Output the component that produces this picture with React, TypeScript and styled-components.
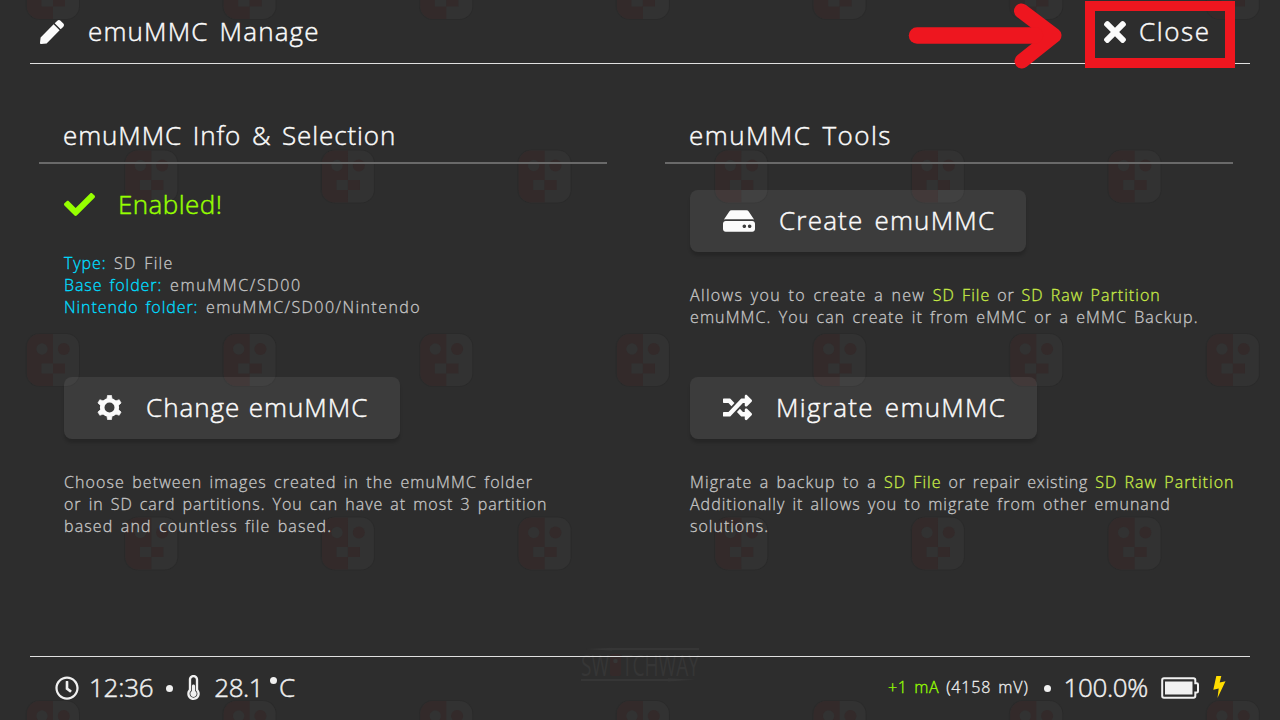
import React from 'react';
import styled, { createGlobalStyle } from 'styled-components';
import {
  FaPen,
  FaTimes,
  FaCheck,
  FaHdd,
  FaRandom,
  FaRegClock,
  FaThermometerHalf,
} from 'react-icons/fa';

const GlobalStyle = createGlobalStyle`
  * {
    box-sizing: border-box;
  }

  body {
    margin: 0;
    background: #2d2d2d;
    font-family: 'Open Sans', 'Noto Sans', sans-serif;
    font-weight: 300;
  }
`;

const Screen = styled.div`
  position: relative;
  display: flex;
  flex-direction: column;
  width: 1280px;
  height: 720px;
  overflow: hidden;
  background: #2d2d2d;
  color: #fbfbfb;
`;

const Wallpaper = styled.svg`
  position: absolute;
  inset: 0;
`;

const Header = styled.header`
  position: relative;
  display: flex;
  align-items: center;
  height: 64px;
  margin: 0 30px;
  padding: 0 40px 1px 10px;
  border-bottom: 1px solid #e0e0e0;
`;

const Icon = styled.span<{ $w: number; $gap: number; $color?: string }>`
  display: flex;
  flex: none;
  width: ${({ $w }) => $w}px;
  margin: 1px ${({ $gap }) => $gap}px 0 0;
  color: ${({ $color }) => $color || '#fbfbfb'};
`;

const Label = styled.span<{ $ls?: number; $ws?: number }>`
  font-size: 26px;
  line-height: 36px;
  white-space: nowrap;
  letter-spacing: ${({ $ls = 1.2 }) => $ls}px;
  word-spacing: ${({ $ws = 3 }) => $ws}px;
  -webkit-text-stroke: 0.45px currentColor;
`;

const CloseButton = styled.button`
  display: flex;
  align-items: center;
  width: 106px;
  margin-left: auto;
  padding: 0;
  border: none;
  background: none;
  color: inherit;
  font: inherit;
`;

const Highlight = styled.div`
  position: absolute;
  top: 1px;
  left: 1085px;
  width: 150px;
  height: 67px;
  border: 10px solid #ee161f;
`;

const Arrow = styled.svg`
  position: absolute;
  top: 0;
  left: 905px;
`;

const Main = styled.main`
  position: relative;
  display: flex;
  flex: 1;
  gap: 58px;
  padding: 53px 47px 0 39px;
`;

const Column = styled.section`
  width: 568px;
`;

const Heading = styled.h2`
  display: flex;
  height: 47px;
  margin: 0;
  padding-left: 24px;
  border-bottom: 2px solid #696969;
  font-weight: inherit;
`;

const Body = styled.div`
  display: flex;
  flex-direction: column;
  align-items: flex-start;
  padding: 26px 0 0 25px;
`;

const Info = styled.div`
  height: 187px;
`;

const Status = styled.div`
  display: flex;
  align-items: center;
  height: 28px;
  margin-bottom: 34px;
  color: #96ff00;
`;

const Text = styled.div`
  color: #c5c5c5;
`;

const Line = styled.div<{ $ls?: number; $ws?: number }>`
  height: 22px;
  font-size: 16px;
  line-height: 22px;
  white-space: nowrap;
  letter-spacing: ${({ $ls = 1.1 }) => $ls}px;
  word-spacing: ${({ $ws = 2 }) => $ws}px;
  -webkit-text-stroke: 0.3px currentColor;
`;

const Cyan = styled.span`
  color: #00ddff;
  letter-spacing: 0.93px;
`;

const Lime = styled.span`
  color: #c7ea46;
  letter-spacing: 1.04px;
`;

const Tight = styled.span`
  letter-spacing: 0.8px;
`;

const Tool = styled.div<{ $height?: number }>`
  height: ${({ $height }) => ($height ? `${$height}px` : 'auto')};
`;

const Button = styled.button<{ $width: number }>`
  display: flex;
  align-items: center;
  width: ${({ $width }) => $width}px;
  height: 62px;
  margin: 0 0 32px;
  padding: 0 0 2px 33px;
  border: none;
  border-radius: 8px;
  background: rgba(255, 255, 255, 0.075);
  box-shadow: 0 4px 3px rgba(0, 0, 0, 0.16);
  color: inherit;
  font: inherit;
`;

const Footer = styled.footer`
  position: relative;
  display: flex;
  align-items: center;
  height: 64px;
  margin: 0 30px;
  padding: 0 23px 3px 25px;
  border-top: 1px solid #e0e0e0;
  color: #f0f0f0;
`;

const Dot = styled.span<{ $left: number; $right: number }>`
  flex: none;
  width: 7px;
  height: 7px;
  margin: 2px ${({ $right }) => $right}px 0 ${({ $left }) => $left}px;
  border-radius: 50%;
  background: #f0f0f0;
`;

const Degree = styled.span`
  width: 7px;
  height: 7px;
  margin: -13px 2px 0 7px;
  border-radius: 50%;
  background: #f0f0f0;
`;

const Power = styled.div`
  display: flex;
  align-items: center;
  width: 339px;
  margin-left: auto;
`;

const Current = styled(Line)<{ $green?: boolean }>`
  margin-right: 7px;
  color: ${({ $green }) => ($green ? '#96ff00' : '#f0f0f0')};
`;

const Percent = styled(Label)`
  width: 97px;
`;

const Gear = () => (
  <svg width="25" height="25" viewBox="0 0 25 25">
    <circle cx="12.5" cy="12.5" r="7.3" fill="none" stroke="currentColor" strokeWidth="4.6" />
    {[0, 60, 120, 180, 240, 300].map((angle) => (
      <path
        key={angle}
        d="M10.6.2h3.800l.7 3.600h-5.200z"
        transform={`rotate(${angle} 12.5 12.5)`}
        fill="currentColor"
        stroke="currentColor"
        strokeWidth="0.6"
        strokeLinejoin="round"
      />
    ))}
  </svg>
);

const Battery = () => (
  <svg width="38" height="22" viewBox="0 0 38 22">
    <path
      d="M3 1.2h29.5q1.8 0 1.8 1.8v3.2h1.5q1.2 0 1.2 1.2v6.8q0 1.2-1.2 1.2h-1.5V19q0 1.8-1.8 1.8H3Q1.2 20.8 1.2 19V3Q1.2 1.2 3 1.2z"
      fill="none"
      stroke="#f0f0f0"
      strokeWidth="2"
    />
    <rect x="4" y="4.5" width="27.5" height="13" fill="#f0f0f0" />
  </svg>
);

const Bolt = () => (
  <svg width="13" height="22" viewBox="0 0 13 22">
    <path d="M3.3 0h5L6.7 6.6l5.8-1.4L4.5 22 5.7 12.5.3 13.8z" fill="#ffdd00" />
  </svg>
);

const STEP = 98.33;

const faces = [-33, 150.5, 334, 517.5, 701].flatMap((y, row) =>
  Array.from({ length: row % 2 ? 6 : 7 }, (_, i) => ({
    x: 27 + STEP * (2 * i + (row % 2)),
    y,
  })),
);

const Background = () => (
  <Wallpaper width="1280" height="720">
    <defs>
      <g id="face">
        <rect x="-1.3" y="-0.8" width="54.2" height="53.6" rx="13.5" fill="#2a2a2a" />
        <rect width="52" height="52" rx="12.5" fill="#323232" />
        <path d="M26 0v52H12.5A12.5 12.5 0 0 1 0 39.500v-27A12.5 12.5 0 0 1 12.5 0z" fill="#332a2a" />
        <circle cx="15" cy="15" r="5.7" fill="#323232" />
        <circle cx="36.8" cy="15" r="6" fill="#332a2a" />
        <rect x="14.5" y="29.5" width="11.5" height="10" fill="#323232" />
        <rect x="26" y="29.5" width="12" height="10" fill="#332a2a" />
      </g>
    </defs>
    {faces.map(({ x, y }) => (
      <use key={`${x}-${y}`} href="#face" x={x} y={y} />
    ))}
    <g fill="#363636">
      <path d="M586 649l26-1.2V648h87v2.2h-87v.6zM581 679h87v-.7l27 1.5-27 1.6v-.5h-87z" />
      <rect x="610" y="654" width="11" height="22" rx="2" fill="#352a2a" />
      <circle cx="615.5" cy="661" r="2.3" />
      <g fontFamily="Open Sans" fontSize="29" fontWeight="400">
        <text x="581" y="675.5" textLength="28" lengthAdjust="spacingAndGlyphs">SW</text>
        <text x="622" y="675.5" textLength="77" lengthAdjust="spacingAndGlyphs">TCHWAY</text>
      </g>
    </g>
  </Wallpaper>
);

const App: React.FC = () => (
  <Screen>
    <GlobalStyle />
    <Background />

    <Header>
      <Icon $w={25} $gap={23}><FaPen size={24} /></Icon>
      <Label $ls={1.17}>emuMMC Manage</Label>
      <CloseButton>
        <Icon $w={22} $gap={13}><FaTimes size={32} style={{ margin: '0 -5px' }} /></Icon>
        <Label $ls={1.6}>Close</Label>
      </CloseButton>
    </Header>

    <Main>
      <Column>
        <Heading><Label $ls={0.9}>emuMMC Info &amp; Selection</Label></Heading>
        <Body>
          <Info>
            <Status>
              <Icon $w={31} $gap={23} $color="#96ff00"><FaCheck size={31} /></Icon>
              <Label $ls={0.45}>Enabled!</Label>
            </Status>
            <Text>
              <Line $ls={1.35}><Cyan>Type:</Cyan> SD File</Line>
              <Line $ls={1.65}><Cyan>Base folder:</Cyan> emuMMC/SD00</Line>
              <Line $ls={1.45}><Cyan>Nintendo folder:</Cyan> emuMMC/SD00/Nintendo</Line>
            </Text>
          </Info>
          <Tool>
            <Button $width={336}>
              <Icon $w={25} $gap={24}><Gear /></Icon>
              <Label $ls={1} $ws={0.5}>Change emuMMC</Label>
            </Button>
            <Text>
              <Line $ls={1.1}>Choose between images created in the emuMMC folder</Line>
              <Line $ls={0.96}>or in SD card partitions. You can have at most 3 partition</Line>
              <Line $ls={1.14}>based and countless file based.</Line>
            </Text>
          </Tool>
        </Body>
      </Column>

      <Column>
        <Heading><Label $ls={1.45}>emuMMC Tools</Label></Heading>
        <Body>
          <Tool $height={187}>
            <Button $width={336}>
              <Icon $w={32} $gap={24}><FaHdd size={32} /></Icon>
              <Label>Create emuMMC</Label>
            </Button>
            <Text>
              <Line $ls={1.34}>
                Allows you to create a new <Lime>SD File</Lime>
                <Tight> or </Tight>
                <Lime>SD Raw Partition</Lime>
              </Line>
              <Line>emuMMC. You can create it from eMMC or a eMMC Backup.</Line>
            </Text>
          </Tool>
          <Tool>
            <Button $width={347}>
              <Icon $w={29} $gap={24}><FaRandom size={29} /></Icon>
              <Label $ls={1.3}>Migrate emuMMC</Label>
            </Button>
            <Text>
              <Line $ls={1.12}>
                Migrate a backup to a <Lime>SD File</Lime>
                <Tight> or repair existing </Tight>
                <Lime>SD Raw Partition</Lime>
              </Line>
              <Line $ls={1.01}>Additionally it allows you to migrate from other emunand</Line>
              <Line $ls={1}>solutions.</Line>
            </Text>
          </Tool>
        </Body>
      </Column>
    </Main>

    <Footer>
      <Icon $w={24} $gap={10} $color="#f0f0f0"><FaRegClock size={24} /></Icon>
      <Label $ls={-0.25}>12:36</Label>
      <Dot $left={13} $right={14} />
      <Icon $w={13} $gap={14} $color="#f0f0f0"><FaThermometerHalf size={25} style={{ margin: '0 -6px' }} /></Icon>
      <Label $ls={-0.5}>28.1</Label>
      <Degree />
      <Label $ls={0}>C</Label>
      <Power>
        <Current $green $ls={0.6}>+1 mA</Current>
        <Current $ls={0.85}>(4158 mV)</Current>
        <Dot $left={8} $right={13} />
        <Percent $ls={-0.4}>100.0%</Percent>
        <Icon $w={38} $gap={14}><Battery /></Icon>
        <Bolt />
      </Power>
    </Footer>

    <Arrow width="160" height="72" viewBox="0 0 160 72">
      <path
        d="M12 35.500H146M116.500 11L149 35.500L117 61"
        fill="none"
        stroke="#ee161f"
        strokeWidth="15"
        strokeLinecap="round"
        strokeLinejoin="round"
      />
      <path d="M12 35.500H130" stroke="#ee161f" strokeWidth="16.500" strokeLinecap="round" />
    </Arrow>
    <Highlight />
  </Screen>
);

export default App;
